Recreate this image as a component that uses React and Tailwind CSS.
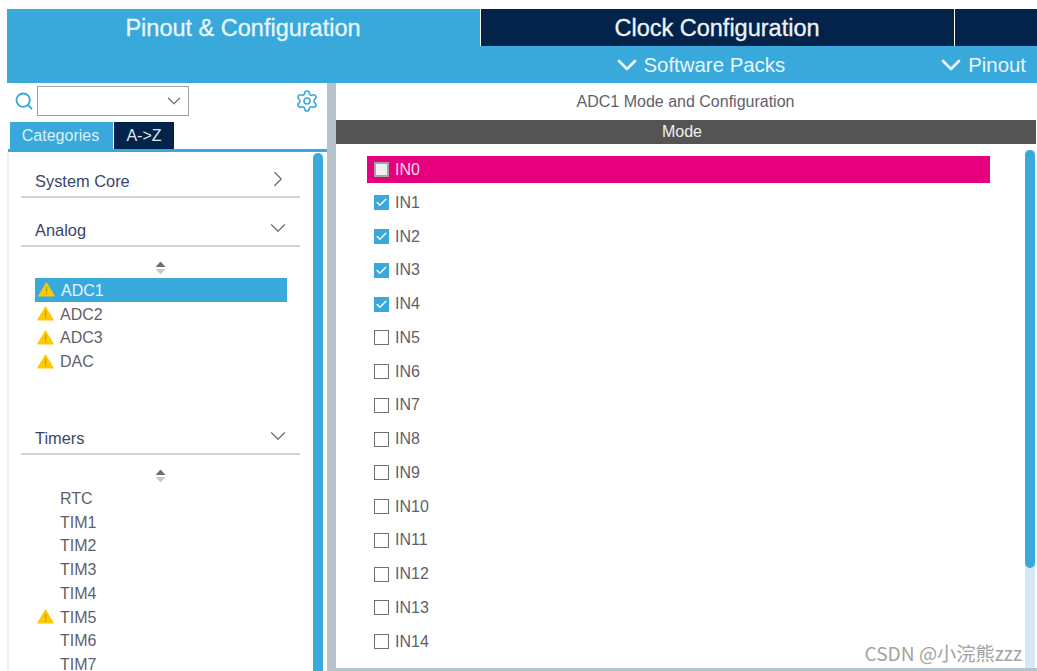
import { ChevronDown, ChevronRight, Search, Settings, Check } from "lucide-react";

const CHANNELS = [
  { name: "IN0", highlighted: true },
  { name: "IN1", checked: true },
  { name: "IN2", checked: true },
  { name: "IN3", checked: true },
  { name: "IN4", checked: true },
  { name: "IN5" },
  { name: "IN6" },
  { name: "IN7" },
  { name: "IN8" },
  { name: "IN9" },
  { name: "IN10" },
  { name: "IN11" },
  { name: "IN12" },
  { name: "IN13" },
  { name: "IN14" },
];

const ANALOG = [
  { name: "ADC1", warn: true, selected: true },
  { name: "ADC2", warn: true },
  { name: "ADC3", warn: true },
  { name: "DAC", warn: true },
];

const TIMERS = [
  { name: "RTC" },
  { name: "TIM1" },
  { name: "TIM2" },
  { name: "TIM3" },
  { name: "TIM4" },
  { name: "TIM5", warn: true },
  { name: "TIM6" },
  { name: "TIM7" },
];

function WarnIcon() {
  return (
    <svg width="17" height="15" viewBox="0 0 17 15" className="shrink-0">
      <path d="M8.5 1 L16.2 14 H0.8 Z" fill="#fdc900" stroke="#fdc900" strokeWidth="1.2" strokeLinejoin="round" />
      <rect x="7.9" y="5" width="1.3" height="5" fill="#b09a30" />
      <rect x="7.9" y="11" width="1.3" height="1.4" fill="#b09a30" />
    </svg>
  );
}

function SortIcon() {
  return (
    <div className="flex justify-center">
      <svg width="11" height="14" viewBox="0 0 11 14">
        <path d="M5.5 0.5 L10.5 6 H0.5 Z" fill="#6b6f72" />
        <path d="M5.5 13.5 L10.5 8 H0.5 Z" fill="#c5c9cc" />
      </svg>
    </div>
  );
}

function SectionHeader({ title, open }) {
  return (
    <div className="flex h-[33px] items-center justify-between border-b-2 border-[#ccd4dc] pl-[14px] pr-[9px] text-[16.4px] text-[#39466b]">
      <span className="pt-[1px]">{title}</span>
      {open ? (
        <ChevronDown size={26} strokeWidth={1.1} className="mb-[3px] text-[#6d6d6d]" />
      ) : (
        <ChevronRight size={26} strokeWidth={1.1} className="mb-[3px] text-[#6d6d6d]" />
      )}
    </div>
  );
}

function PeripheralRow({ item }) {
  return (
    <div
      className={
        "flex h-[23.75px] items-center text-[16px] " +
        (item.selected ? "w-[252px] bg-[#39a9dc] pl-[3px] text-[#e8f6fc]" : "pl-[2px] text-[#5f5f6b]")
      }
    >
      <div className="flex w-[23px] shrink-0 items-center">{item.warn ? <WarnIcon /> : null}</div>
      <span className="pt-[2px]">{item.name}</span>
    </div>
  );
}

function ChannelRow({ channel }) {
  if (channel.highlighted) {
    return (
      <div className="mb-[3px] flex h-[27px] w-[623px] items-center bg-[#e6007e] pl-[7px] text-[16px] text-[#fbd8ea]">
        <span className="h-[15px] w-[15px] border-2 border-[#a5a5a5] bg-[#eef0f2]" />
        <span className="ml-[6px]">{channel.name}</span>
      </div>
    );
  }
  return (
    <div className="flex h-[33.75px] items-center pl-[7px] text-[16px] text-[#5f5f6b]">
      {channel.checked ? (
        <span className="flex h-[15px] w-[15px] items-center justify-center bg-[#39a9dc]">
          <Check size={13} strokeWidth={2.5} className="text-white" />
        </span>
      ) : (
        <span className="h-[15px] w-[15px] border border-[#6f6f6f] bg-white" />
      )}
      <span className="ml-[6px]">{channel.name}</span>
    </div>
  );
}

export default function App() {
  return (
    <div className="h-[671px] w-[1037px] overflow-hidden bg-white pl-[7px] pt-[9px] font-['Liberation_Sans','Noto_Sans_CJK_SC',sans-serif]">
      <div className="flex h-[37px] text-[23.5px] text-[#e9f6fc] [-webkit-text-stroke:0.3px_currentColor]">
        <div className="flex w-[473px] items-center justify-center bg-[#39a9dc] pr-[1px] pt-[2px]">Pinout &amp; Configuration</div>
        <div className="flex w-[474px] items-center justify-center border-l border-white bg-[#03234b] pr-[1px] pt-[2px] text-[#eef3f7]">
          Clock Configuration
        </div>
        <div className="flex-1 border-l border-white bg-[#03234b]" />
      </div>

      <div className="flex h-[37px] items-center justify-end bg-[#39a9dc] pr-[11px] text-[20.4px] text-[#e9f6fc]">
        <ChevronDown size={32} strokeWidth={2} className="mr-[1px]" />
        <span className="pt-[2px]">Software Packs</span>
        <ChevronDown size={32} strokeWidth={2} className="ml-[150px] mr-[1px]" />
        <span className="pt-[2px]">Pinout</span>
      </div>

      <div className="flex h-[588px]">
        <aside className="flex h-full w-[320px] flex-col">
          <div className="flex h-[39px] items-center pb-[3px] pl-[8px] pr-[8px]">
            <Search size={20} strokeWidth={2.2} className="-ml-[1px] -mt-[1px] text-[#39a9dc]" />
            <div className="ml-[3px] flex h-[30px] w-[152px] items-center justify-end border border-[#a0a0a0] pr-[3px]">
              <ChevronDown size={22} strokeWidth={1.3} className="text-[#707070]" />
            </div>
            <Settings size={24} strokeWidth={1.6} className="ml-auto -mt-[1px] text-[#39a9dc]" />
          </div>

          <div className="flex h-[27px] pl-[3px] text-[16px]">
            <div className="flex w-[103px] items-center justify-center bg-[#39a9dc] pr-[2px] text-[#d9f0fa]">Categories</div>
            <div className="ml-[1px] flex w-[60px] items-center justify-center bg-[#03234b] text-[#dfe7ee]">A-&gt;Z</div>
          </div>
          <div className="ml-[1px] h-[3px] bg-[#39a9dc]" />

          <div className="flex min-h-0 flex-1 border-l-2 border-[#f0f3f6] pl-[12px]">
            <div className="w-[279px] shrink-0 overflow-hidden pt-[13px]">
              <SectionHeader title="System Core" />
              <div className="mt-[16px]">
                <SectionHeader title="Analog" open />
              </div>
              <div className="mt-[14px]">
                <SortIcon />
              </div>
              <div className="ml-[14px] mt-[3px]">
                {ANALOG.map((item) => (
                  <PeripheralRow key={item.name} item={item} />
                ))}
              </div>
              <div className="mt-[49px]">
                <SectionHeader title="Timers" open />
              </div>
              <div className="mt-[14px]">
                <SortIcon />
              </div>
              <div className="ml-[14px] mt-[3px]">
                {TIMERS.map((item) => (
                  <PeripheralRow key={item.name} item={item} />
                ))}
              </div>
            </div>
            <div className="ml-[13px] mt-px w-[10px] rounded-t-[5px] bg-[#39a9dc]" />
          </div>
        </aside>

        <div className="w-[9px] bg-[#b7c3cb]" />

        <main className="flex h-full min-w-0 flex-1 flex-col border-b-[3px] border-[#b7c3cb]">
          <div className="flex h-[37px] items-center justify-center border-t border-[#eef0f2] pr-[2px] text-[16px] text-[#5f5f6b]">
            ADC1 Mode and Configuration
          </div>
          <div className="mr-px flex h-[24px] items-center justify-center bg-[#535453] pr-[8px] text-[16px] text-[#f0f0f0]">
            Mode
          </div>
          <div className="relative flex min-h-0 flex-1">
            <div className="ml-[31px] flex-1 pt-[12px]">
              {CHANNELS.map((channel) => (
                <ChannelRow key={channel.name} channel={channel} />
              ))}
            </div>
            <div className="relative mr-[2px] mt-[6px] w-[10px] bg-[#d6e8f6]">
              <div className="h-[418px] rounded-[5px] bg-[#39a9dc]" />
            </div>
            <span className="absolute bottom-[1px] right-[15px] font-['Noto_Sans_CJK_SC',sans-serif] text-[19.2px] leading-[28px] text-[#a3a3a3]">CSDN @小浣熊zzz</span>
          </div>
        </main>
      </div>
    </div>
  );
}
